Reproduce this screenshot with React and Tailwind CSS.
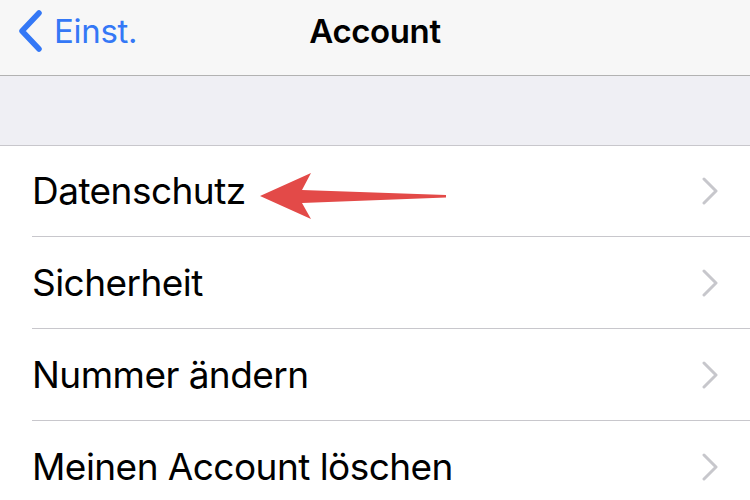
import React from "react";

const font = { fontFamily: "Inter, 'Noto Sans', sans-serif" };

function Chevron() {
  return (
    <svg width="16" height="28" viewBox="0 0 16 28" className="shrink-0">
      <path d="M2 2 L14 14 L2 26" fill="none" stroke="#c7c7cc" strokeWidth="3" strokeLinecap="round" strokeLinejoin="round" />
    </svg>
  );
}

function Row({ label, h, children }) {
  return (
    <div className={`flex items-center ${h} pl-[32px]`}>
      <div className="flex flex-1 items-center h-full border-b border-[#c8c7cc] pr-[32px]">
        <span className="text-[37px] text-black tracking-[-0.55px]">{label}</span>
        {children}
        <div className="flex-1" />
        <Chevron />
      </div>
    </div>
  );
}

export default function App() {
  return (
    <div className="w-[750px] h-[500px] overflow-hidden bg-white" style={font}>
      <div className="relative h-[76px] bg-[#f7f7f7] border-b border-[#b2b2b2] flex items-start">
        <div className="flex items-center pl-[17px] pt-[10px]">
          <svg width="26" height="42" viewBox="0 0 26 42">
            <path d="M22 3 L5 21 L22 39" fill="none" stroke="#3478f6" strokeWidth="5.5" strokeLinecap="round" strokeLinejoin="round" />
          </svg>
          <span className="ml-[11px] text-[33px] text-[#3478f6] leading-none tracking-[-0.3px] mt-[1px]">Einst.</span>
        </div>
        <div className="absolute left-0 right-0 top-[15px] text-center text-[33px] font-semibold leading-none tracking-[-0.4px] text-black">
          Account
        </div>
      </div>
      <div className="h-[70px] bg-[#efeff4] border-b border-[#c8c7cc]" />
      <div className="relative">
        <Row label="Datenschutz" h="h-[91px]" />
        <Row label="Sicherheit" h="h-[92px]" />
        <Row label="Nummer ändern" h="h-[92px]" />
        <Row label="Meinen Account löschen" h="h-[92px]" />
        <svg className="absolute left-[255px] top-[23px]" width="200" height="52" viewBox="255 169 200 52">
          <path d="M260 196 L311 173 L302 190 L446 195 L446 197.5 L302 203 L311 219 Z" fill="#e34a48" />
        </svg>
      </div>
    </div>
  );
}
